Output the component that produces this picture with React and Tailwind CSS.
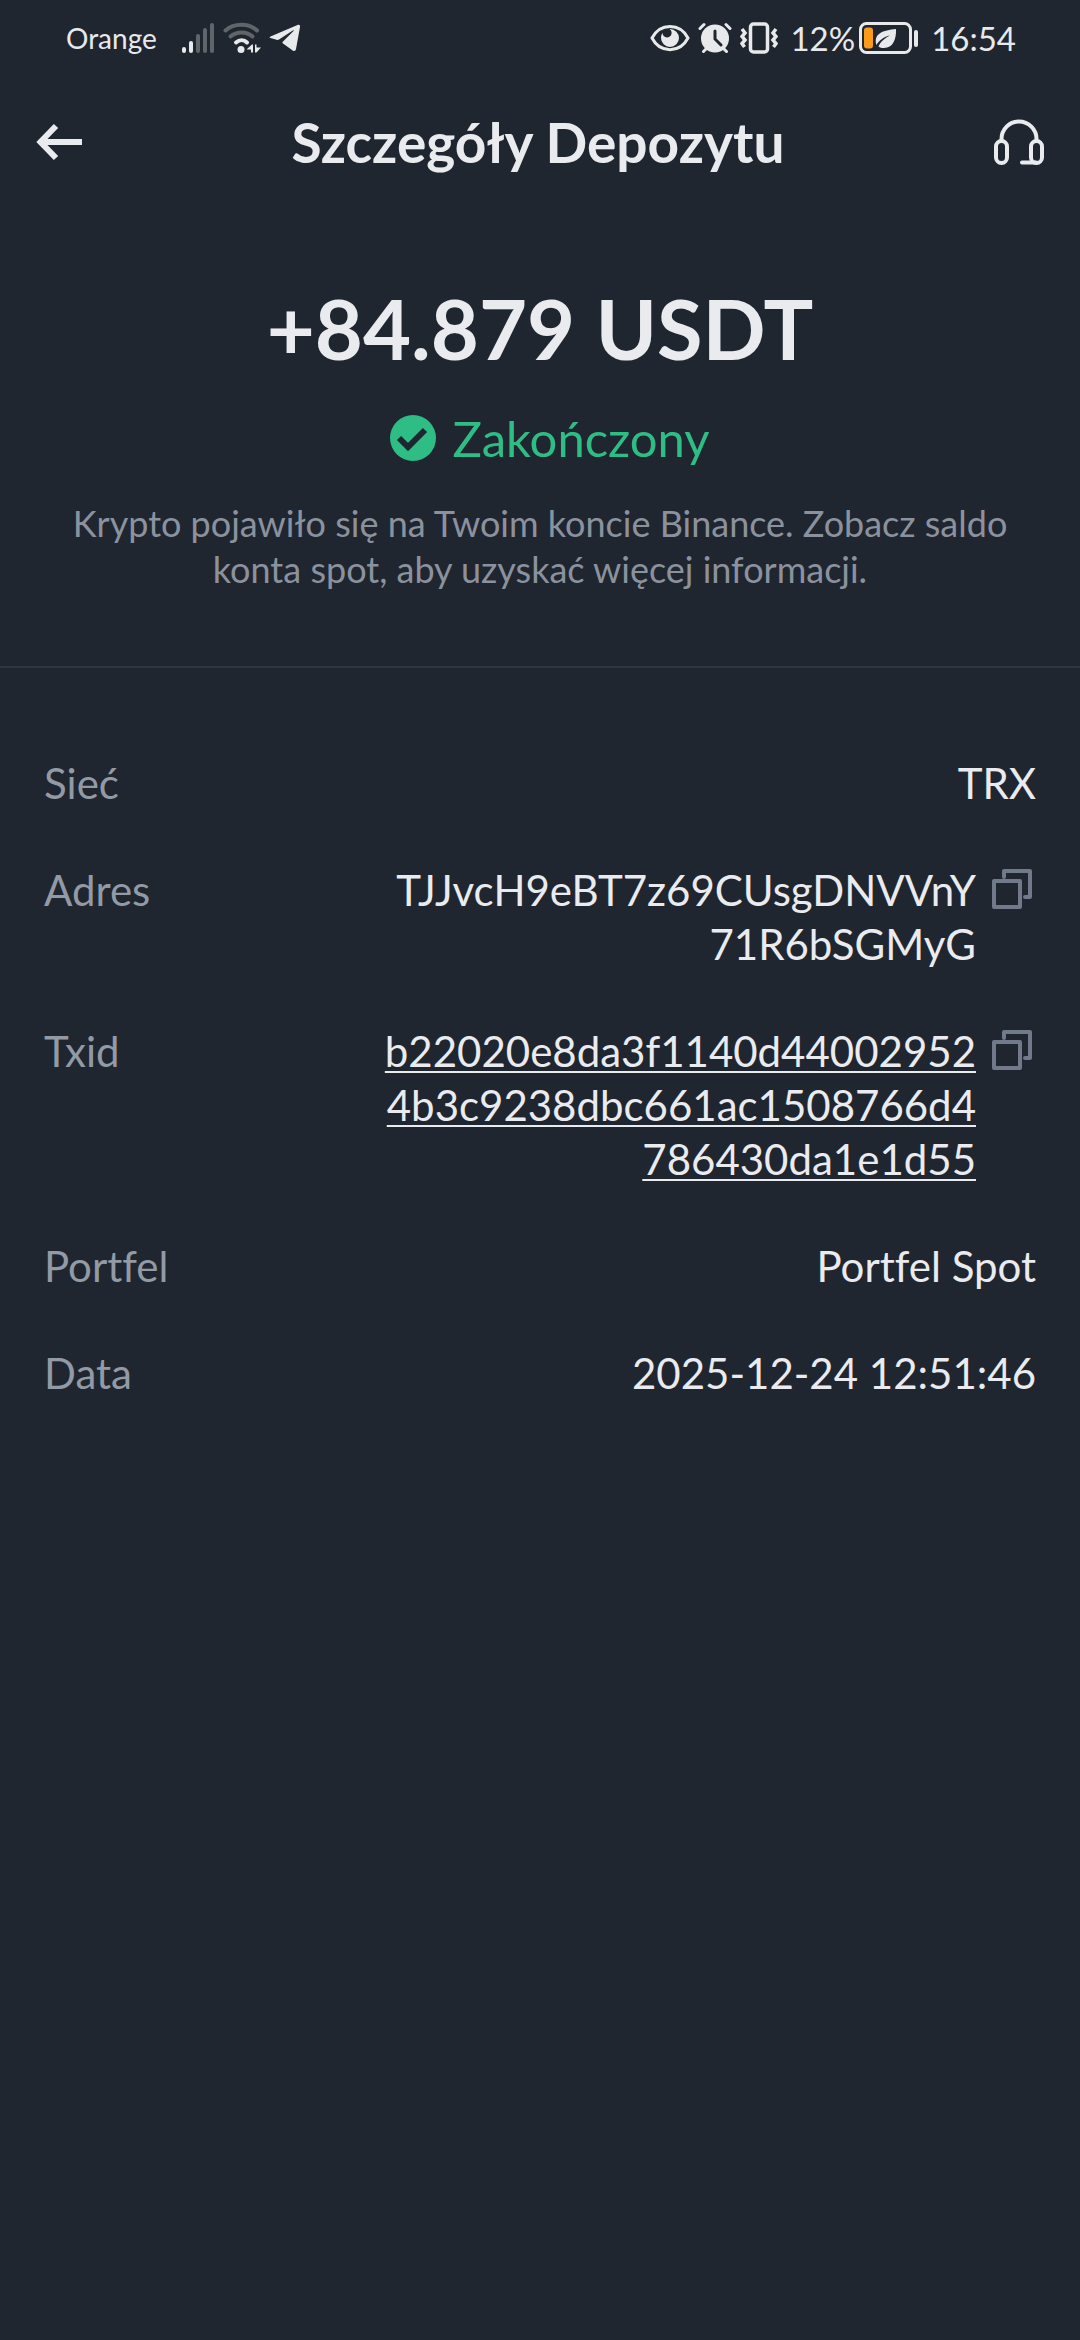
import React from "react";

const details = [
  { label: "Sieć", lines: ["TRX"] },
  {
    label: "Adres",
    lines: ["TJJvcH9eBT7z69CUsgDNVVnY", "71R6bSGMyG"],
    copy: true,
  },
  {
    label: "Txid",
    lines: [
      "b22020e8da3f1140d44002952",
      "4b3c9238dbc661ac1508766d4",
      "786430da1e1d55",
    ],
    copy: true,
    link: true,
  },
  { label: "Portfel", lines: ["Portfel Spot"] },
  { label: "Data", lines: ["2025-12-24 12:51:46"] },
];

const SignalIcon = () => (
  <svg width="34" height="32" viewBox="0 0 34 32" fill="#e8e9eb" aria-hidden="true">
    <rect x="1" y="25" width="4" height="6" rx="2" />
    <rect x="8" y="19" width="4" height="12" rx="2" />
    <g fill="#60656c">
      <rect x="15" y="12" width="4" height="19" rx="2" />
      <rect x="22" y="6" width="4" height="25" rx="2" />
      <rect x="29" y="1" width="4" height="30" rx="2" />
    </g>
  </svg>
);

const WifiIcon = () => (
  <svg width="38" height="32" viewBox="0 0 38 32" fill="none" strokeLinecap="round" aria-hidden="true">
    <path d="M2.5 8.5C11 .8 26 .8 34 8.5" stroke="#60656c" strokeWidth="4" />
    <path d="M7.5 14.5c6-5.5 16.500-5.500 22 0" stroke="#60656c" strokeWidth="4" />
    <path d="M13 20.500c3.500-3 8-3 11 0" stroke="#e8e9eb" strokeWidth="4" />
    <circle cx="18" cy="27.500" r="3.500" fill="#e8e9eb" />
    <path d="M24 27l5-4.500h1v8h-2v-3h-4zM32 22.500h1.500v3H38l-4.500 5H32z" fill="#e8e9eb" />
  </svg>
);

const PlaneIcon = () => (
  <svg width="32" height="28" viewBox="0 0 32 28" fill="#e8e9eb" aria-hidden="true">
    <path d="M1.500 12.500L28.500 1c1.800-.7 2.800 0 2.500 2l-4 22c-.4 2-1.700 2.500-3.300 1.400L14 19.500c-.8-.6-.8-1.300 0-2L24.500 7c.5-.6 0-1-.7-.5L10 15.500c-.8.500-1.500.6-2.400.3L1.500 14c-1.200-.4-1.200-1 0-1.500z" />
  </svg>
);

const EyeIcon = () => (
  <svg width="40" height="28" viewBox="0 0 40 28" aria-hidden="true">
    <path d="M2 14C10-1.500 30-1.500 38 14 30 29.500 10 29.500 2 14z" fill="none" stroke="#e8e9eb" strokeWidth="3" />
    <path d="M20 5a9 9 0 1 1-9 9c0-2 .6-3.600 1.600-5a4.500 4.500 0 1 0 6.900-3.900z" fill="#e8e9eb" />
  </svg>
);

const AlarmIcon = () => (
  <svg width="34" height="32" viewBox="0 0 34 32" fill="none" stroke="#e8e9eb" strokeWidth="3" strokeLinecap="round" aria-hidden="true">
    <circle cx="17" cy="16.500" r="14" fill="#e8e9eb" stroke="none" />
    <path d="M2 6.500L6 2.500M32 6.500L28 2.500M5.500 29.500l3-3M28.500 29.500l-3-3" />
    <path d="M17 9v8l6 6" stroke="#202630" />
  </svg>
);

const VibrateIcon = () => (
  <svg width="38" height="32" viewBox="0 0 38 32" fill="none" stroke="#e8e9eb" aria-hidden="true">
    <rect x="10.500" y="2" width="17" height="28" rx="3" strokeWidth="3.500" />
    <path d="M2 7l3 4-3 3.500 3 3.500-3 3.500L4.500 25M36 7l-3 4 3 3.500-3 3.500 3 3.500-2.500 3.500" strokeWidth="3.500" />
  </svg>
);

const BatteryIcon = () => (
  <svg width="60" height="32" viewBox="0 0 60 32" aria-hidden="true">
    <rect x="1.500" y="1.500" width="50" height="29" rx="6" fill="none" stroke="#e8e9eb" strokeWidth="3" />
    <rect x="5" y="5.500" width="9" height="21" rx="3" fill="#fc9a1a" />
    <path d="M37 7c.500 10-3 19-12 19-2.500 0-4-.5-5.500-1.500C22 19 26 16 31 13.500c-6 1-11 5-13.500 9.500C14 12 24 8 37 7z" fill="#e8e9eb" />
    <rect x="55" y="8" width="4" height="17" rx="2" fill="#e8e9eb" />
  </svg>
);

const BackIcon = () => (
  <svg width="46" height="38" viewBox="0 0 46 38" fill="none" stroke="#eaebef" strokeWidth="6" aria-hidden="true">
    <path d="M20 3L4.500 19 20 35M5 19h41" />
  </svg>
);

const HeadsetIcon = () => (
  <svg width="50" height="46" viewBox="0 0 50 46" fill="none" stroke="#eaebef" strokeWidth="4" aria-hidden="true">
    <rect x="2" y="22" width="11" height="22" rx="5.500" />
    <rect x="37" y="22" width="11" height="22" rx="5.500" />
    <path d="M7.500 22v-2a17.500 17.500 0 0 1 35 0v2M42 43.500H28" strokeLinecap="round" />
  </svg>
);

const CheckIcon = () => (
  <svg width="46" height="46" viewBox="0 0 46 46" aria-hidden="true">
    <circle cx="23" cy="23" r="23" fill="#2ebd85" />
    <path d="M9 23l9 9 17-17" fill="none" stroke="#202630" strokeWidth="6" />
  </svg>
);

const CopyIcon = () => (
  <svg width="40" height="40" viewBox="0 0 40 40" fill="none" stroke="#707a8a" strokeWidth="4" strokeLinejoin="round" aria-hidden="true">
    <rect x="2" y="12" width="26" height="26" />
    <path d="M12 8V2h26v26h-5" strokeLinecap="round" />
  </svg>
);

const StatusBar = () => (
  <div className="flex h-20 items-center justify-between pr-16 pb-1 pl-[66px] text-[#e8e9eb]">
    <div className="flex items-center">
      <span className="mr-6 text-[28px] leading-8">Orange</span>
      <SignalIcon />
      <span className="ml-2">
        <WifiIcon />
      </span>
      <span className="ml-2">
        <PlaneIcon />
      </span>
    </div>
    <div className="flex items-center">
      <EyeIcon />
      <span className="ml-2">
        <AlarmIcon />
      </span>
      <span className="mr-3 ml-2">
        <VibrateIcon />
      </span>
      <span className="text-[33px] leading-10">12%</span>
      <span className="mr-3 ml-1">
        <BatteryIcon />
      </span>
      <span className="text-[33px] leading-10">16:54</span>
    </div>
  </div>
);

const DetailRow = ({ label, lines, copy, link }) => {
  const text = lines.map((line) => (
    <span key={line} className="block">
      {line}
    </span>
  ));

  return (
    <div className="flex items-start justify-between">
      <dt className="text-[#929aa5]">{label}</dt>
      <dd className="flex items-start gap-4 text-right">
        {link ? (
          <a href="#txid" className="underline decoration-2 underline-offset-4">
            {text}
          </a>
        ) : (
          <span>{text}</span>
        )}
        {copy && (
          <button type="button" aria-label={`Kopiuj ${label}`} className="mt-1.5 mr-1">
            <CopyIcon />
          </button>
        )}
      </dd>
    </div>
  );
};

const App = () => {
  return (
    <div className="min-h-screen bg-[#202630] font-['Lato',sans-serif] text-[#eaebef] [font-variant-ligatures:none]">
      <StatusBar />

      <header className="flex h-31 items-center justify-between px-9">
        <button type="button" aria-label="Wstecz">
          <BackIcon />
        </button>
        <h1 className="text-[55px] leading-16 font-bold">Szczegóły Depozytu</h1>
        <button type="button" aria-label="Pomoc">
          <HeadsetIcon />
        </button>
      </header>

      <section className="flex flex-col items-center border-b-2 border-[#2f3641] px-14 pt-19 pb-[74px] text-center">
        <p className="text-[83px] leading-24 font-bold">+84.879 USDT</p>
        <div className="mt-[34px] flex items-center gap-4 pl-5 text-[49px] leading-14 text-[#2ebd85]">
          <CheckIcon />
          <span>Zakończony</span>
        </div>
        <p className="mt-[34px] text-[36px] leading-[46px] text-[#8b929e]">
          Krypto pojawiło się na Twoim koncie Binance. Zobacz saldo
          <br />
          konta spot, aby uzyskać więcej informacji.
        </p>
      </section>

      <dl className="flex flex-col gap-[53px] px-11 pt-22 text-[42px] leading-[54px]">
        {details.map((item) => (
          <DetailRow key={item.label} {...item} />
        ))}
      </dl>
    </div>
  );
};

export default App;
